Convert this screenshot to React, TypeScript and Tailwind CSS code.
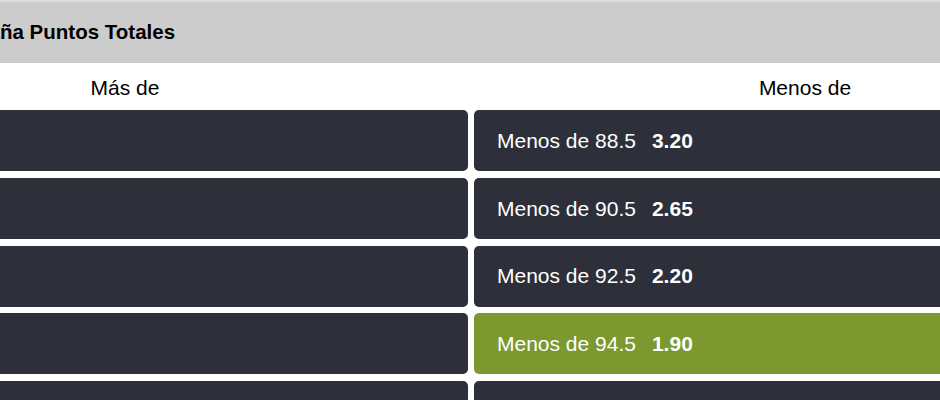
import React from "react";

const rows: { label: string; odds: string; active?: boolean }[] = [
  { label: "Menos de 88.5", odds: "3.20" },
  { label: "Menos de 90.5", odds: "2.65" },
  { label: "Menos de 92.5", odds: "2.20" },
  { label: "Menos de 94.5", odds: "1.90", active: true },
  { label: "", odds: "" },
];

export default function App() {
  return (
    <div
      className="w-[940px] h-[400px] overflow-hidden bg-white"
      style={{ fontFamily: '"Liberation Sans", Arial, Helvetica, sans-serif' }}
    >
      <div className="ml-[-218px] w-[1378px]">
        <div className="h-[63px] bg-[#cccccc] border-t-2 border-[#dedede] flex items-center pl-[169px]">
          <span className="text-[20.5px] font-bold text-black leading-none">España Puntos Totales</span>
        </div>
        <div className="grid grid-cols-2 gap-x-[6px] h-[47px] pt-[3px] items-center text-[21px] text-black">
          <div className="text-center">Más de</div>
          <div className="text-center pr-[24px]">Menos de</div>
        </div>
        <div className="grid grid-cols-2 gap-x-[6px] gap-y-[6.75px]">
          {rows.map((r, i) => (
            <React.Fragment key={i}>
              <div className="h-[61px] rounded-[5px] bg-[#2d2f3b]" />
              <div
                className={
                  "h-[61px] rounded-[5px] flex items-center pl-[23px] text-white text-[21px] " +
                  (r.active ? "bg-[#7b992e]" : "bg-[#2d2f3b]")
                }
              >
                {r.label && (
                  <>
                    <span>{r.label}</span>
                    <span className="ml-[16px] font-bold">{r.odds}</span>
                  </>
                )}
              </div>
            </React.Fragment>
          ))}
        </div>
      </div>
    </div>
  );
}
